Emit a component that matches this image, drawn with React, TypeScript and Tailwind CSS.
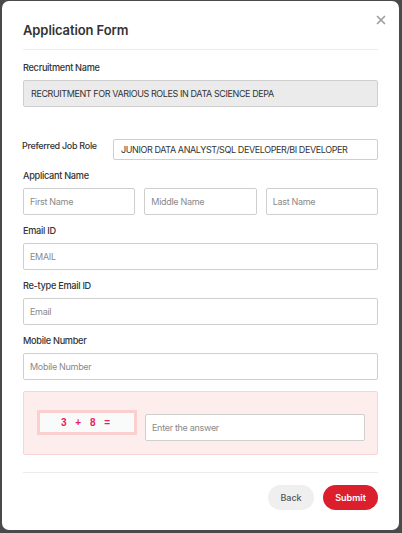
import { X } from 'lucide-react';

const font = { fontFamily: 'Inter, "Noto Sans", sans-serif' };

function Label({ children }: { children: React.ReactNode }) {
  return <label className="block text-[9.2px] font-medium text-[#333] tracking-[-0.3px] leading-[12px] mb-[6px]">{children}</label>;
}

function Field({ placeholder, className = '' }: { placeholder: string; className?: string }) {
  return (
    <input
      placeholder={placeholder}
      className={`block w-full h-[27px] px-[6px] border border-[#cfcfcf] rounded-[2px] bg-white text-[9px] tracking-[-0.3px] text-[#333] placeholder:text-[#8a8a8a] outline-none ${className}`}
    />
  );
}

export default function App() {
  return (
    <div className="h-[533px] bg-[#4a4a4a] pt-[1px] px-[2px]" style={font}>
      <div className="relative h-[529px] w-[397px] bg-white rounded-[7px] px-[21px]">
        <button className="absolute right-[11px] top-[12px] text-[#a0a0a0]">
          <X size={14} strokeWidth={3} />
        </button>

        <div className="pt-[20px] pb-[10px] border-b border-[#ececec]">
          <h1 className="text-[13px] font-semibold text-[#333] tracking-[-0.1px] leading-[18px]">Application Form</h1>
        </div>

        <div className="mt-[12px]">
          <Label>Recruitment Name</Label>
          <div className="h-[27px] px-[7px] flex items-center border border-[#cfcfcf] rounded-[2px] bg-[#ebebeb] text-[9px] text-[#333] tracking-[-0.4px]">
            RECRUITMENT FOR VARIOUS ROLES IN DATA SCIENCE DEPA
          </div>
        </div>

        <div className="mt-[32px] flex items-start">
          <span className="w-[91px] shrink-0 text-[9px] font-medium text-[#333] tracking-[-0.3px] leading-[12px] pt-[1px] -ml-[1px]">Preferred Job Role</span>
          <div className="flex-1 h-[21px] px-[7px] flex items-center border border-[#cfcfcf] rounded-[2px] text-[9px] text-[#333] tracking-[-0.4px]">
            JUNIOR DATA ANALYST/SQL DEVELOPER/BI DEVELOPER
          </div>
        </div>

        <div className="mt-[10px]">
          <Label>Applicant Name</Label>
          <div className="grid grid-cols-3 gap-[9px]">
            <Field placeholder="First Name" />
            <Field placeholder="Middle Name" />
            <Field placeholder="Last Name" />
          </div>
        </div>

        <div className="mt-[10px]">
          <Label>Email ID</Label>
          <Field placeholder="EMAIL" />
        </div>

        <div className="mt-[10px]">
          <Label>Re-type Email ID</Label>
          <Field placeholder="Email" />
        </div>

        <div className="mt-[10px]">
          <Label>Mobile Number</Label>
          <Field placeholder="Mobile Number" />
        </div>

        <div className="mt-[11px] h-[64px] bg-[#fdeded] border border-[#f8d4d4] rounded-[2px] flex items-center pl-[13px] pr-[12px] gap-[8px]">
          <div className="w-[100px] h-[25px] -mt-[1px] bg-[#f8fbfa] border-[3px] border-[#f9cfd0] flex items-center justify-center">
            <span className="text-[10px] font-bold text-[#e8205a] tracking-[3px]" style={{ fontFamily: '"Liberation Sans", sans-serif' }}>3 + 8 =</span>
          </div>
          <input
            placeholder="Enter the answer"
            className="block flex-1 h-[27px] mt-[8px] px-[6px] border border-[#cfcfcf] rounded-[2px] bg-white text-[9px] tracking-[-0.3px] placeholder:text-[#8a8a8a] outline-none"
          />
        </div>

        <div className="mt-[17px] border-t border-[#ececec] pt-[12px] flex justify-end gap-[9px]">
          <button className="w-[46px] h-[25px] rounded-full bg-[#efefef] text-[9px] text-[#555] font-medium">Back</button>
          <button className="w-[55px] h-[25px] rounded-full bg-[#dc1f2c] text-[9px] text-white font-semibold">Submit</button>
        </div>
      </div>
    </div>
  );
}
